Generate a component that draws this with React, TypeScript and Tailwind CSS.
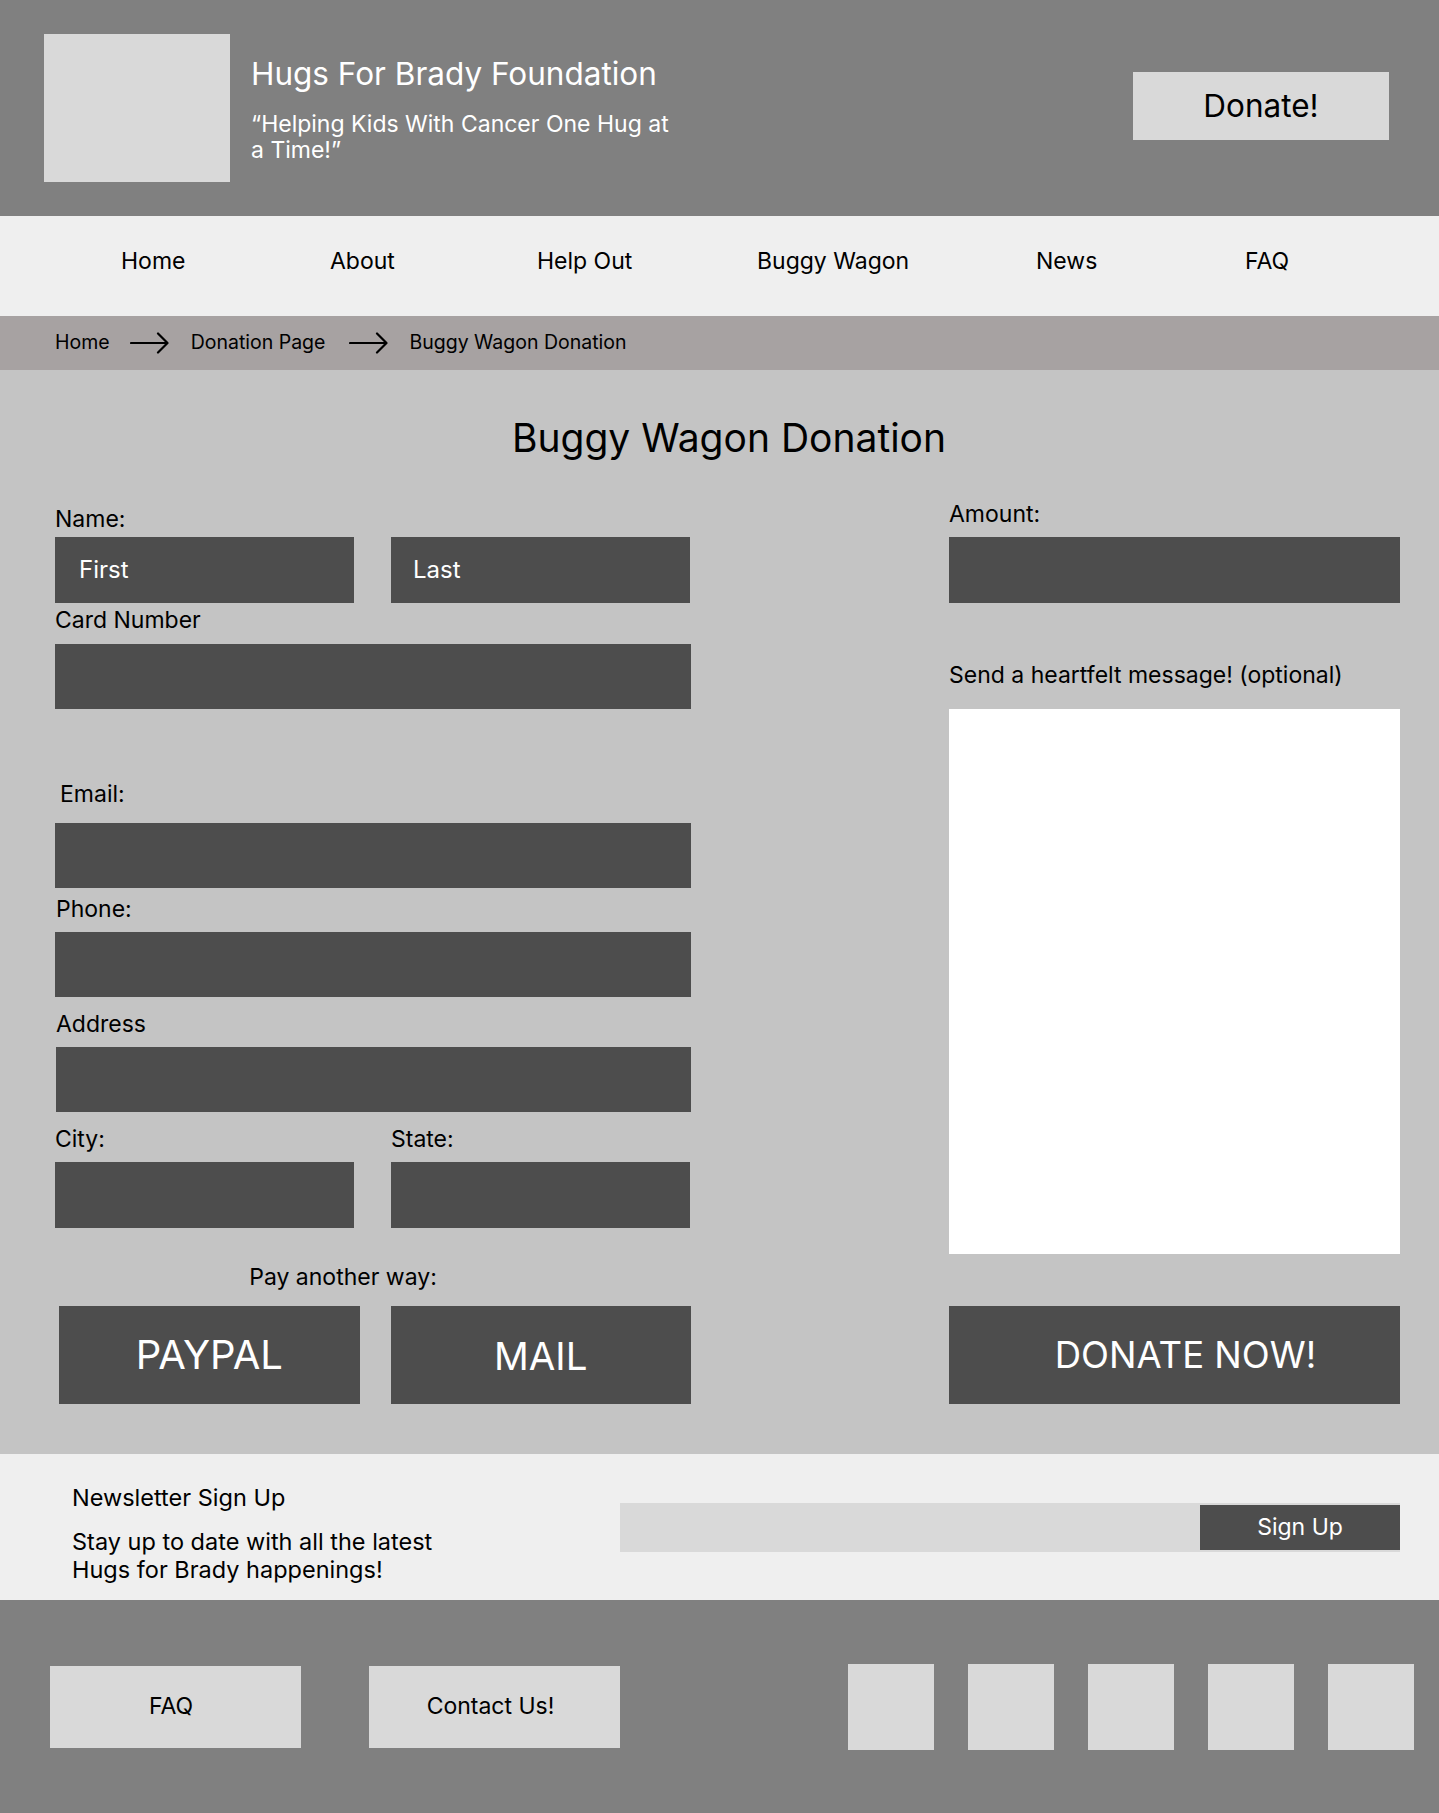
const Arrow = () => (
  <svg width="39" height="22" viewBox="0 0 39 22" fill="none" stroke="#000" strokeWidth="2.2" strokeLinecap="round" strokeLinejoin="round">
    <path d="M1 11 H37" />
    <path d="M28 1.5 L37.5 11 L28 20.5" />
  </svg>
);

const Field = ({ className = "", children }: { className?: string; children?: React.ReactNode }) => (
  <div className={`bg-[#4d4d4d] flex items-center text-white text-[24px] ${className}`}>{children}</div>
);

const Label = ({ className = "", children }: { className?: string; children: React.ReactNode }) => (
  <div className={`h-[25px] leading-[25px] text-[23px] text-black whitespace-nowrap ${className}`}>{children}</div>
);

export default function App() {
  const nav = [
    { t: "Home", w: "w-[209px]" },
    { t: "About", w: "w-[207px]" },
    { t: "Help Out", w: "w-[220px]" },
    { t: "Buggy Wagon", w: "w-[279px]" },
    { t: "News", w: "w-[209px]" },
    { t: "FAQ", w: "w-[100px]" },
  ];
  return (
    <div className="w-[1439px] font-['Inter',sans-serif]">
      {/* header */}
      <header className="h-[216px] bg-[#808080] flex items-start">
        <div className="ml-[44px] mt-[34px] w-[186px] h-[148px] bg-[#d9d9d9]" />
        <div className="ml-[21px] mt-[56px] w-[430px] text-white">
          <h1 className="text-[31.5px] leading-[35px] whitespace-nowrap">Hugs For Brady Foundation</h1>
          <p className="mt-[20px] text-[23px] leading-[26px]">“Helping Kids With Cancer One Hug at a Time!”</p>
        </div>
        <button className="ml-auto mr-[50px] mt-[72px] w-[256px] h-[68px] bg-[#d9d9d9] text-[31.5px] text-black">
          Donate!
        </button>
      </header>

      {/* nav */}
      <nav className="h-[100px] bg-[#efefef] flex items-center pl-[121px] pb-[9px] text-[23px] text-black">
        {nav.map((n) => (
          <span key={n.t} className={n.w}>{n.t}</span>
        ))}
      </nav>

      {/* breadcrumb */}
      <div className="h-[54px] bg-[#a7a2a2] flex items-center pl-[55px] text-[19.5px] text-black">
        <span>Home</span>
        <span className="ml-[20px] mr-[22px] flex"><Arrow /></span>
        <span>Donation Page</span>
        <span className="ml-[24px] mr-[21px] flex"><Arrow /></span>
        <span>Buggy Wagon Donation</span>
      </div>

      {/* main */}
      <main className="bg-[#c4c4c4] pt-[44px] pb-[50px]">
        <h2 className="text-[39px] leading-[48px] text-center pl-[19px] text-black">Buggy Wagon Donation</h2>
        <div className="flex pl-[55px] gap-[258px]">
          <div className="w-[636px] flex flex-col">
            <Label className="mt-[45px]">Name:</Label>
            <div className="mt-[5px] flex gap-[37px]">
              <Field className="w-[299px] h-[66px] pl-[24px]">First</Field>
              <Field className="w-[299px] h-[66px] pl-[22px]">Last</Field>
            </div>
            <Label className="mt-[5px]">Card Number</Label>
            <Field className="mt-[11px] h-[65px]" />
            <Label className="mt-[73px] pl-[5px]">Email:</Label>
            <Field className="mt-[16px] h-[65px]" />
            <Label className="mt-[9px] pl-[1px]">Phone:</Label>
            <Field className="mt-[10px] h-[65px]" />
            <Label className="mt-[15px] pl-[1px]">Address</Label>
            <Field className="mt-[10px] h-[65px] ml-[1px]" />
            <div className="mt-[15px] flex gap-[37px]">
              <div className="w-[299px]">
                <Label>City:</Label>
                <Field className="mt-[10px] h-[66px]" />
              </div>
              <div className="w-[299px]">
                <Label>State:</Label>
                <Field className="mt-[10px] h-[66px]" />
              </div>
            </div>
            <Label className="mt-[37px] w-[576px] text-center">Pay another way:</Label>
            <div className="mt-[16px] flex gap-[31px] pl-[4px]">
              <button className="w-[301px] h-[98px] bg-[#4d4d4d] text-white text-[40px]">PAYPAL</button>
              <button className="w-[301px] h-[98px] bg-[#4d4d4d] text-white text-[38.5px] pt-[4px]">MAIL</button>
            </div>
          </div>

          <div className="w-[451px] flex flex-col">
            <Label className="mt-[40px]">Amount:</Label>
            <Field className="mt-[10px] h-[66px]" />
            <Label className="mt-[60px]">Send a heartfelt message! (optional)</Label>
            <textarea className="mt-[21px] h-[545px] w-[451px] bg-white resize-none outline-none" />
            <button className="mt-[52px] h-[98px] bg-[#4d4d4d] text-white text-[36.5px] pl-[22px]">DONATE NOW!</button>
          </div>
        </div>
      </main>

      {/* newsletter */}
      <section className="h-[146px] bg-[#efefef] flex items-start">
        <div className="pl-[72px] pt-[31px] text-black">
          <p className="text-[23.5px] leading-[26px]">Newsletter Sign Up</p>
          <p className="mt-[17px] text-[23.5px] leading-[28px] w-[405px]">
            Stay up to date with all the latest Hugs for Brady happenings!
          </p>
        </div>
        <div className="ml-auto mr-[39px] mt-[49px] w-[780px] h-[49px] bg-[#d9d9d9] flex justify-end py-[2px]">
          <button className="w-[200px] bg-[#4d4d4d] text-white text-[23px]">Sign Up</button>
        </div>
      </section>

      {/* footer */}
      <footer className="h-[213px] bg-[#808080] flex items-center">
        <button className="ml-[50px] w-[251px] h-[82px] bg-[#d9d9d9] text-[23px] text-black pr-[9px]">FAQ</button>
        <button className="ml-[68px] w-[251px] h-[82px] bg-[#d9d9d9] text-[23px] text-black pr-[8px]">Contact Us!</button>
        <div className="ml-auto mr-[25px] flex gap-[34px]">
          {[0, 1, 2, 3, 4].map((i) => (
            <div key={i} className="w-[86px] h-[86px] bg-[#d9d9d9]" />
          ))}
        </div>
      </footer>
    </div>
  );
}
